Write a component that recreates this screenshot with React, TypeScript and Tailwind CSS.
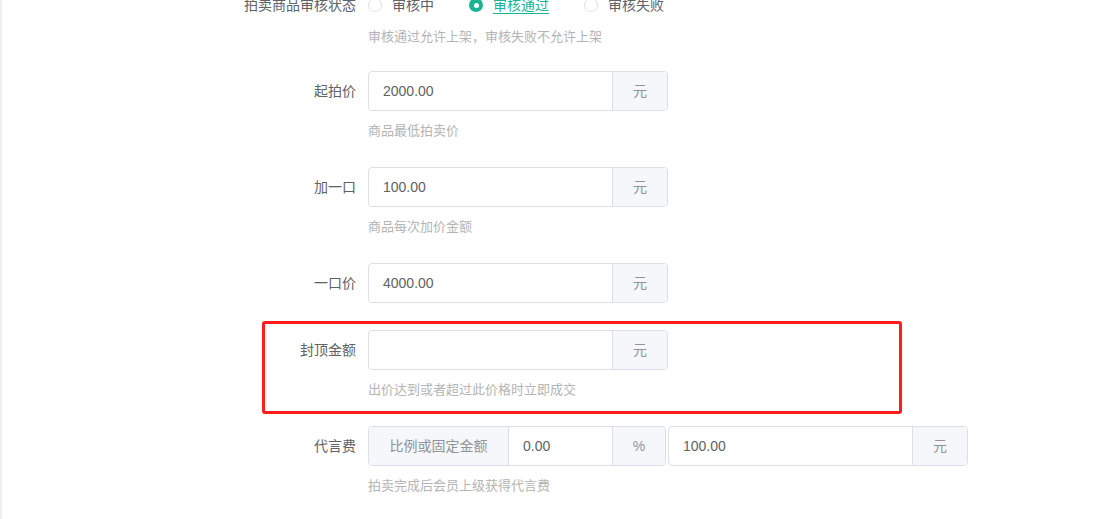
import React from 'react';

// --- Small form building blocks ---
const Label: React.FC<{ text: string }> = ({ text }) => (
  <div className="w-[140px] h-[40px] shrink-0 flex items-center justify-end pr-[12px] text-[14px] text-[#606266]">
    {text}
  </div>
);

const Help: React.FC<{ text: string; top?: string }> = ({ text, top = 'pt-[10px]' }) => (
  <div className={`${top} text-[13px] leading-[20px] text-[#b4b4b4]`}>{text}</div>
);

const Suffix: React.FC<{ text: string; width?: string }> = ({ text, width = 'w-[55px]' }) => (
  <div className={`${width} h-full flex items-center justify-center bg-[#f5f7fa] border-l border-[#dcdfe6] text-[14px] text-[#909399]`}>
    {text}
  </div>
);

const MoneyInput: React.FC<{ value: string; unit: string }> = ({ value, unit }) => (
  <div className="w-[300px] h-[40px] flex border border-[#dcdfe6] rounded-[4px] overflow-hidden bg-white">
    <div className="flex-1 flex items-center pl-[14px] text-[14px] text-[#606266]">{value}</div>
    <Suffix text={unit} />
  </div>
);

const Radio: React.FC<{ label: string; checked?: boolean }> = ({ label, checked }) => (
  <div className="flex items-center gap-[10px]">
    {checked ? (
      <span className="w-[14px] h-[14px] rounded-full bg-[#1ab394] flex items-center justify-center">
        <span className="w-[5px] h-[5px] rounded-full bg-white" />
      </span>
    ) : (
      <span className="w-[14px] h-[14px] rounded-full border border-[#dcdfe6] bg-white" />
    )}
    <span
      className={
        checked
          ? 'text-[14px] text-[#1ab394] underline decoration-[#1ab394] underline-offset-[3px]'
          : 'text-[14px] text-[#606266]'
      }
    >
      {label}
    </span>
  </div>
);

export default function App() {
  return (
    <div className="h-[519px] w-full overflow-hidden bg-white flex font-['Liberation_Sans','Noto_Sans_CJK_SC',sans-serif]">
      {/* thin grey edge of the sidebar */}
      <div className="w-[2px] h-full bg-[#f0f0f0] shrink-0" />

      <div className="flex-1 pl-[226px] -mt-[15px]">
        {/* 审核状态 */}
        <div className="flex mb-[24px]">
          <Label text="拍卖商品审核状态" />
          <div>
            <div className="h-[40px] flex items-center gap-[35px]">
              <Radio label="审核中" />
              <Radio label="审核通过" checked />
              <Radio label="审核失败" />
            </div>
            <Help text="审核通过允许上架，审核失败不允许上架" top="pt-[2px]" />
          </div>
        </div>

        {/* 起拍价 */}
        <div className="flex mb-[26px]">
          <Label text="起拍价" />
          <div>
            <MoneyInput value="2000.00" unit="元" />
            <Help text="商品最低拍卖价" />
          </div>
        </div>

        {/* 加一口 */}
        <div className="flex mb-[26px]">
          <Label text="加一口" />
          <div>
            <MoneyInput value="100.00" unit="元" />
            <Help text="商品每次加价金额" />
          </div>
        </div>

        {/* 一口价 */}
        <div className="flex mb-[27px]">
          <Label text="一口价" />
          <MoneyInput value="4000.00" unit="元" />
        </div>

        {/* 封顶金额 - highlighted with a red annotation box */}
        <div className="relative flex mb-[26px]">
          <div className="absolute -left-[226px] -top-[9px] ml-[260px] w-[640px] h-[93px] border-[3px] border-[#ff1c1c] rounded-[3px] pointer-events-none" />
          <Label text="封顶金额" />
          <div>
            <MoneyInput value="" unit="元" />
            <Help text="出价达到或者超过此价格时立即成交" />
          </div>
        </div>

        {/* 代言费 */}
        <div className="flex">
          <Label text="代言费" />
          <div>
            <div className="flex gap-[2px]">
              <div className="w-[298px] h-[40px] flex border border-[#dcdfe6] rounded-[4px] overflow-hidden bg-white">
                <div className="w-[140px] h-full flex items-center justify-center bg-[#f5f7fa] border-r border-[#dcdfe6] text-[14px] text-[#909399]">
                  比例或固定金额
                </div>
                <div className="flex-1 flex items-center pl-[14px] text-[14px] text-[#606266]">0.00</div>
                <Suffix text="%" width="w-[53px]" />
              </div>
              <MoneyInput value="100.00" unit="元" />
            </div>
            <Help text="拍卖完成后会员上级获得代言费" />
          </div>
        </div>
      </div>
    </div>
  );
}
